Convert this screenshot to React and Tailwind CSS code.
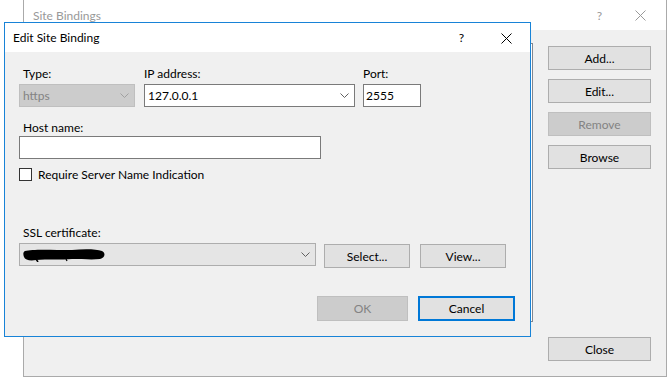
import React from "react";

const font = { fontFamily: 'Lato, "Noto Sans", Arial, sans-serif' };

function Chevron({ color = "#606060" }) {
  return (
    <svg width="9" height="5" viewBox="0 0 9 5" className="shrink-0">
      <path d="M0.5 0.5 L4.5 4.5 L8.5 0.5" fill="none" stroke={color} strokeWidth="1" />
    </svg>
  );
}

function CloseX({ color = "#000" }) {
  return (
    <svg width="11" height="11" viewBox="0 0 11 11">
      <path d="M0.5 0.5 L10.5 10.5 M10.5 0.5 L0.5 10.5" stroke={color} strokeWidth="1" />
    </svg>
  );
}

function Btn({ children, className = "", disabled }) {
  return (
    <div
      className={
        "flex items-center justify-center h-[24px] border text-[12px] pt-[1px] " +
        (disabled
          ? "bg-[#cccccc] border-[#bfbfbf] text-[#838383] "
          : "bg-[#e1e1e1] border-[#adadad] text-black ") +
        className
      }
    >
      {children}
    </div>
  );
}

function Label({ children, inset = true }) {
  return (
    <div className={(inset ? "pl-[4px] " : "") + "h-[16px] leading-[18px] text-[12px] text-black"}>
      {children}
    </div>
  );
}

export default function App() {
  return (
    <div className="relative w-[671px] h-[383px] bg-white overflow-hidden" style={font}>
      {/* background window: Site Bindings */}
      <div className="absolute left-[23px] top-0 w-[644px] h-[377px] border-l border-r border-b border-[#aaaaaa] bg-[#f0f0f0] flex flex-col">
        <div className="h-[30px] bg-white flex items-center pl-[9px] pr-[20px] pt-[1px] shrink-0">
          <span className="text-[12px] text-[#999999] flex-1">Site Bindings</span>
          <span className="text-[12px] text-[#999999] mr-[33px]">?</span>
          <CloseX color="#999999" />
        </div>
        <div className="flex-1 flex pt-[13px] pl-[12px] pr-[15px] pb-[15px] gap-[15px]">
          <div className="w-[497px] h-[279px] border border-[#828790] bg-white"></div>
          <div className="w-[103px] flex flex-col pt-[3px]">
            <div className="flex flex-col gap-[9px]">
              <Btn>Add...</Btn>
              <Btn>Edit...</Btn>
              <Btn disabled>Remove</Btn>
              <Btn>Browse</Btn>
            </div>
            <Btn className="mt-auto">Close</Btn>
          </div>
        </div>
      </div>

      {/* Edit Site Binding dialog */}
      <div className="absolute left-[4px] top-[22px] w-[527px] h-[315px] border border-[#1883d7] bg-[#f0f0f0] flex flex-col">
        <div className="h-[29px] bg-white flex items-center pl-[8px] pr-[18px] pt-[1px] shrink-0">
          <span className="text-[12px] text-black flex-1">Edit Site Binding</span>
          <span className="text-[12px] text-black mr-[37px]">?</span>
          <CloseX />
        </div>
        <div className="pl-[14px] pt-[13px] flex flex-col">
          <div className="flex">
            <div className="w-[116px] flex flex-col">
              <Label>Type:</Label>
              <div className="mt-[3px] h-[23px] border border-[#bfbfbf] bg-[#cccccc] flex items-center pl-[3px] pr-[5px]">
                <span className="flex-1 text-[12px] text-[#838383] pt-[1px]">https</span>
                <Chevron color="#a0a0a0" />
              </div>
            </div>
            <div className="w-[211px] ml-[9px] flex flex-col">
              <Label inset={false}>IP address:</Label>
              <div className="mt-[3px] h-[23px] border border-[#7a7a7a] bg-white flex items-center pl-[3px] pr-[5px]">
                <span className="flex-1 text-[12px] text-black pt-[1px]">127.0.0.1</span>
                <Chevron />
              </div>
            </div>
            <div className="w-[58px] ml-[8px] flex flex-col">
              <Label inset={false}>Port:</Label>
              <div className="mt-[3px] h-[23px] border border-[#7a7a7a] bg-white flex items-center pl-[2px]">
                <span className="text-[12px] text-black pt-[1px]">2555</span>
              </div>
            </div>
          </div>

          <div className="mt-[12px]">
            <Label>Host name:</Label>
          </div>
          <div className="mt-[1px] w-[302px] h-[23px] border border-[#7a7a7a] bg-white"></div>

          <div className="mt-[9px] flex items-center h-[13px]">
            <div className="w-[13px] h-[13px] border border-[#333333] bg-white"></div>
            <span className="ml-[6px] text-[12px] text-black leading-[16px] pt-[1px]">Require Server Name Indication</span>
          </div>

          <div className="mt-[43px]">
            <Label>SSL certificate:</Label>
          </div>
          <div className="mt-[3px] flex items-start">
            <div className="w-[297px] h-[23px] border border-[#adadad] bg-[#e5e5e5] flex items-center pl-[2px] pr-[5px]">
              <div className="flex-1">
                <svg width="84" height="14" viewBox="0 0 84 14">
                  <path
                    d="M3 3 C10 1, 30 2, 50 2 C62 1, 74 1, 80 3 C84 5, 83 10, 78 11 C70 12, 60 11, 50 11 C40 12, 25 11, 14 12 C8 13, 3 12, 2 9 C1 6, 1 4, 3 3 Z"
                    fill="#000"
                  />
                  <path d="M14 11 L16 14" stroke="#000" strokeWidth="1.5" />
                  <path d="M44 11 L45 13" stroke="#000" strokeWidth="1.2" />
                </svg>
              </div>
              <Chevron />
            </div>
            <Btn className="ml-[8px] mt-[1px] w-[86px]">Select...</Btn>
            <Btn className="ml-[10px] mt-[1px] w-[86px]">View...</Btn>
          </div>

          <div className="mt-[28px] flex">
            <Btn disabled className="ml-[298px] w-[91px] h-[25px]">OK</Btn>
            <div className="ml-[10px] w-[97px] h-[25px] border-2 border-[#0078d7] bg-[#e1e1e1] flex items-center justify-center text-[12px] text-black pt-[1px]">
              Cancel
            </div>
          </div>
        </div>
      </div>
    </div>
  );
}
